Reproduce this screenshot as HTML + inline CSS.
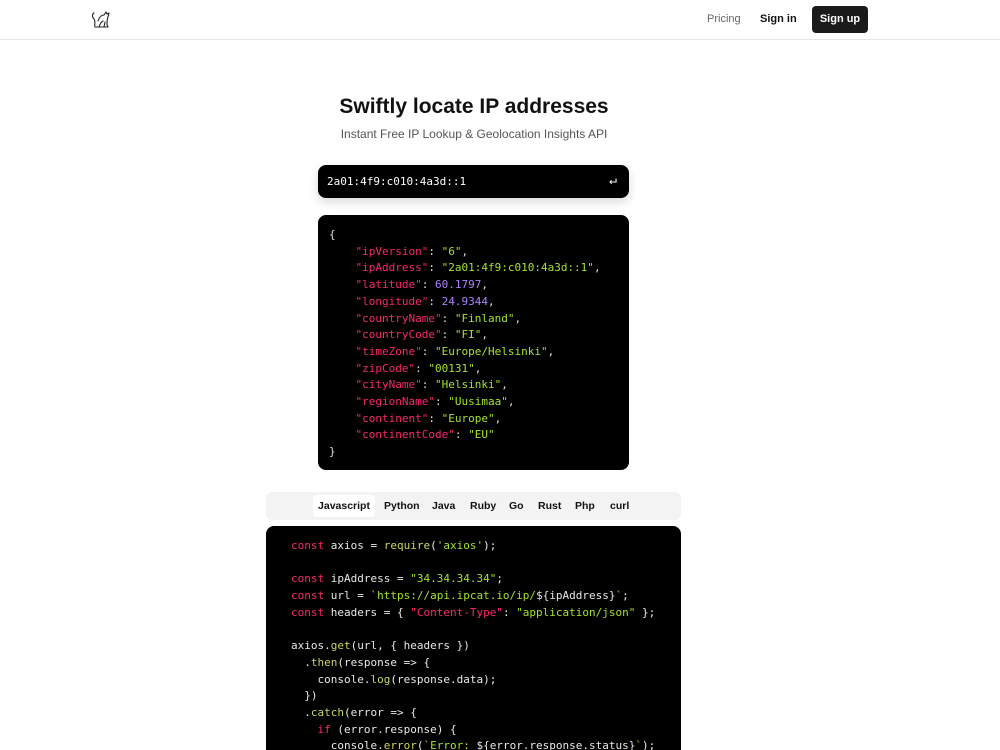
<!DOCTYPE html>
<html style="height:750px;overflow:hidden"><head><meta charset="utf-8"><style>
*{margin:0;padding:0;box-sizing:border-box}
body{width:1000px;height:750px;overflow:hidden;position:relative;background:#fff;font-family:"Liberation Sans",sans-serif;color:#111}
.nav{height:40px;border-bottom:1px solid #e5e5e5;position:relative}
.nav .logo{position:absolute;left:89px;top:9px}
.nav a{position:absolute;font-size:11px;top:13px;text-decoration:none}
.pricing{left:707px;color:#666}
.signin{left:760px;color:#111;font-weight:bold}
.signup{left:812px;top:6px!important;width:56px;height:27px;background:#1a1a1a;color:#fff!important;border-radius:4px;font-weight:bold;text-align:center;line-height:27px}
h1{position:absolute;top:95px;left:0;width:948px;text-align:center;font-size:21px;font-weight:bold}
.sub{position:absolute;top:127px;left:0;width:948px;text-align:center;font-size:12px;color:#555}
.mono{font-family:"DejaVu Sans Mono",monospace;font-size:11px}
.inp{position:absolute;left:318px;top:165px;width:311px;height:33px;background:#000;border-radius:8px;color:#fff;padding:10px 9px;box-shadow:0 4px 10px rgba(0,0,0,.15)}
.inp span{position:absolute;right:12px;top:8px;font-size:13px}
.json{position:absolute;left:318px;top:215px;width:311px;height:255px;background:#000;border-radius:8px;padding:12px 11px;color:#ddd;line-height:16.7px;white-space:pre}
.k{color:#f92672}.s{color:#a6e22e}.n{color:#ae81ff}.f{color:#cdd561}
.tabs{position:absolute;left:266px;top:492px;width:415px;height:28px;background:#f3f3f3;border-radius:6px;font-size:10.5px;font-weight:bold}
.tabs span{position:absolute;top:8px}
.tabs .act{left:47px;top:3px;width:62px;height:22px;background:#fff;border-radius:3px;text-align:center;line-height:22px}
.code{position:absolute;left:266px;top:526px;width:415px;height:224px;overflow:hidden;background:#000;border-radius:8px 8px 0 0;padding:12px 25px;color:#e8e8e8;line-height:16.7px;white-space:pre}
</style></head><body>
<div class="nav">
<svg class="logo" width="22" height="22" viewBox="0 0 22 22" fill="none" stroke="#222" stroke-width="1.1" stroke-linecap="round" stroke-linejoin="round"><path d="M5 4c-2 1-2 4 0 6 2 3 0 6 1 8h13l-1-2c0-3 0-6 1-8l1-4-2 1-1-2-2 3c-3 0-5 3-6 6"/><path d="M10 18c1-3 2-5 4-6M15 18l1-5"/></svg>
<a class="pricing">Pricing</a><a class="signin">Sign in</a><a class="signup">Sign up</a>
</div>
<h1>Swiftly locate IP addresses</h1>
<div class="sub">Instant Free IP Lookup &amp; Geolocation Insights API</div>
<div class="inp mono">2a01:4f9:c010:4a3d::1<span>↵</span></div>
<div class="json mono">{
    <span class="k">"ipVersion"</span>: <span class="s">"6"</span>,
    <span class="k">"ipAddress"</span>: <span class="s">"2a01:4f9:c010:4a3d::1"</span>,
    <span class="k">"latitude"</span>: <span class="n">60.1797</span>,
    <span class="k">"longitude"</span>: <span class="n">24.9344</span>,
    <span class="k">"countryName"</span>: <span class="s">"Finland"</span>,
    <span class="k">"countryCode"</span>: <span class="s">"FI"</span>,
    <span class="k">"timeZone"</span>: <span class="s">"Europe/Helsinki"</span>,
    <span class="k">"zipCode"</span>: <span class="s">"00131"</span>,
    <span class="k">"cityName"</span>: <span class="s">"Helsinki"</span>,
    <span class="k">"regionName"</span>: <span class="s">"Uusimaa"</span>,
    <span class="k">"continent"</span>: <span class="s">"Europe"</span>,
    <span class="k">"continentCode"</span>: <span class="s">"EU"</span>
}</div>
<div class="tabs"><span class="act">Javascript</span><span style="left:118px">Python</span><span style="left:166px">Java</span><span style="left:204px">Ruby</span><span style="left:243px">Go</span><span style="left:272px">Rust</span><span style="left:309px">Php</span><span style="left:344px">curl</span></div>
<div class="code mono"><span class="k">const</span> axios = <span class="f">require</span>(<span class="s">'axios'</span>);

<span class="k">const</span> ipAddress = <span class="s">"34.34.34.34"</span>;
<span class="k">const</span> url = <span class="s">`https://api.ipcat.io/ip/</span>${ipAddress}<span class="s">`</span>;
<span class="k">const</span> headers = { <span class="k">"Content-Type"</span>: <span class="s">"application/json"</span> };

axios.<span class="f">get</span>(url, { headers })
  .<span class="f">then</span>(response => {
    console.<span class="f">log</span>(response.data);
  })
  .<span class="f">catch</span>(error => {
    <span class="k">if</span> (error.response) {
      console.<span class="f">error</span>(<span class="s">`Error: </span>${error.response.status}<span class="s">`</span>);
    }
  });</div>
</body></html>
